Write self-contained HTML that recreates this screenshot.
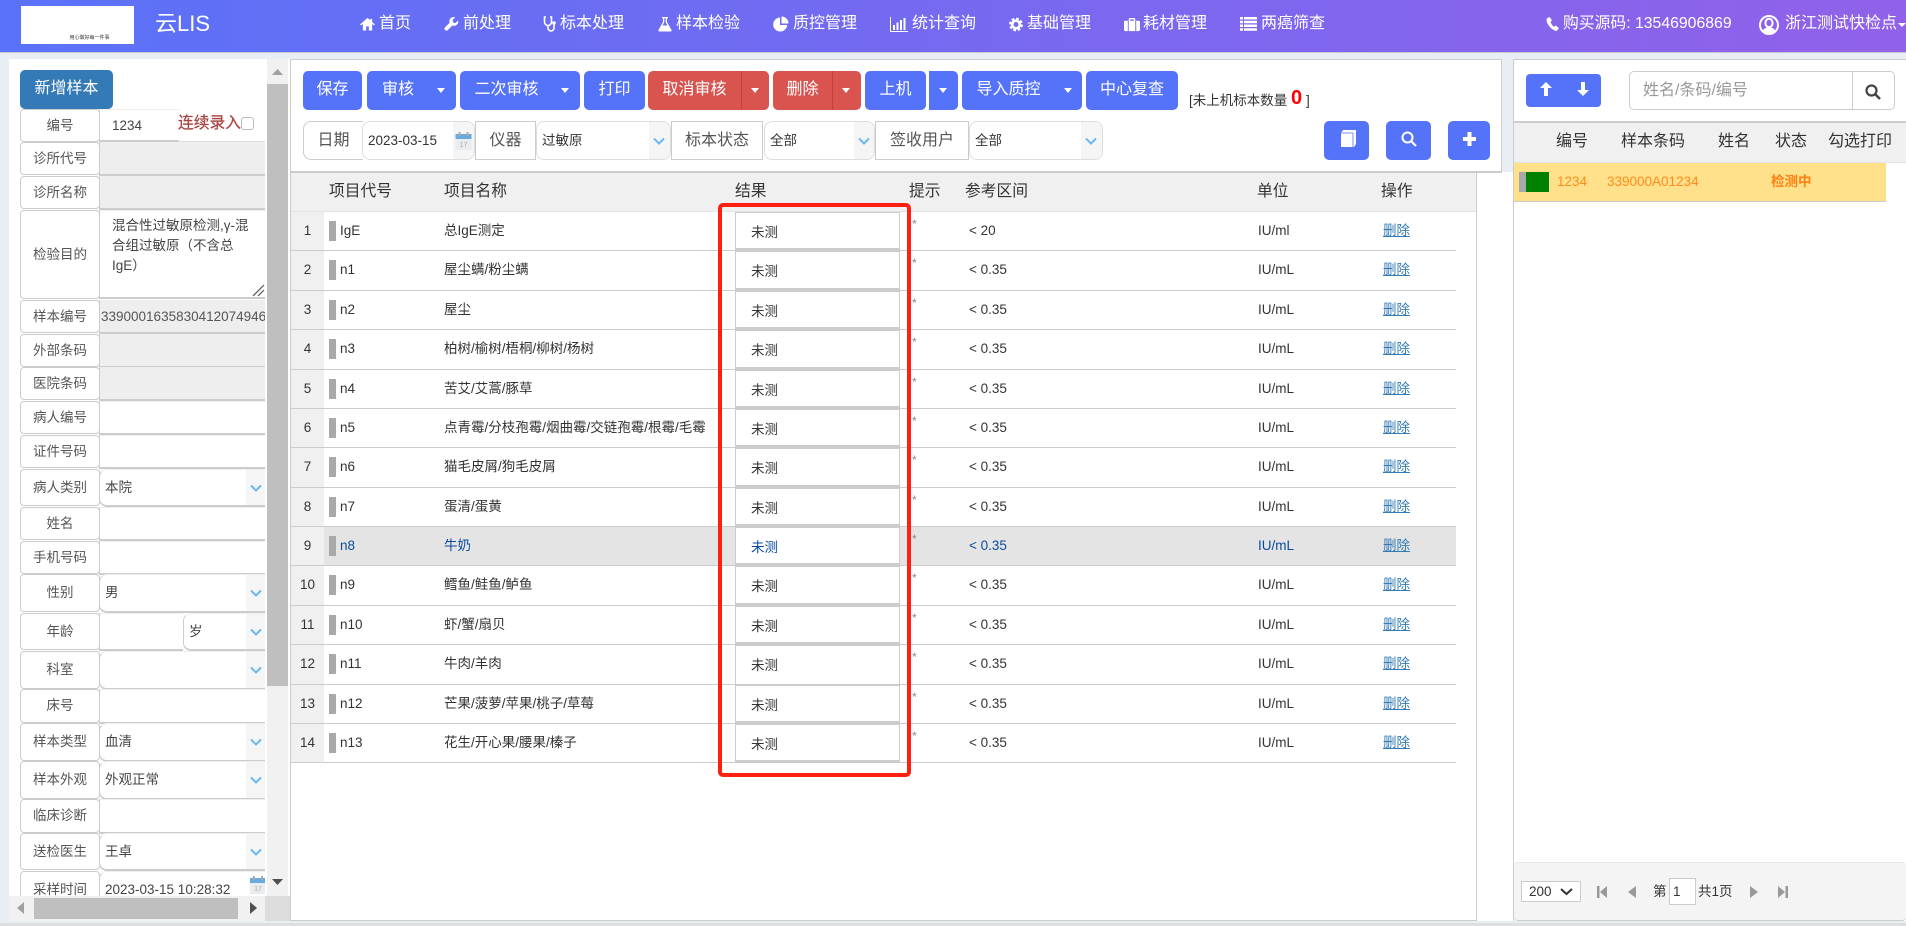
<!DOCTYPE html>
<html lang="zh"><head><meta charset="utf-8"><title>云LIS</title>
<style>
*{box-sizing:border-box}
html,body{margin:0;padding:0;width:1906px;height:926px;overflow:hidden;background:#e9edf4;font-family:"Liberation Sans","Noto Sans CJK SC",sans-serif;font-size:13.5px;color:#333}
div,span,a,b,i,svg{position:absolute;display:block}
i,b{font-style:normal;font-weight:normal}
#hd{left:0;top:0;width:1906px;height:53px;background:linear-gradient(90deg,#5a72f8,#9161e9);border-bottom:1px solid #c6c9d0}
#hd span{color:#fff;font-size:16px;line-height:20px;top:14px;white-space:nowrap}
#hd svg{fill:#fff}
#logo{left:21px;top:6px;width:113px;height:38px;background:#fff;color:#333;font-size:5px;line-height:7px;text-align:center;padding-top:29px;padding-left:24px}
#leftp{left:0;top:0;width:265px;height:896px;overflow:hidden}
#leftbg{left:9px;top:59px;width:256px;height:862px;background:#fff}
.l{left:20px;width:80px;border:1px solid #ccc;border-radius:4px;background:#fff;color:#555;font-size:13.5px;text-align:center;white-space:nowrap}
.v{left:99px;width:170px;background:#fff;border-top:1px solid #eee;border-bottom:2px solid #ccc;border-left:1px solid #ccc;padding-left:12px;font-size:13.5px;color:#444;white-space:nowrap;overflow:hidden}
.d{background:#eee}
.s{border-radius:8px 0 0 8px;padding-left:5px}
.ar{right:4px;top:0;bottom:0;width:19px;background:#f5f5f5}
.ar svg,.ar2 svg{left:4px;top:50%;margin-top:-4px;width:12px;height:8px;fill:none;stroke:#6ab8f2;stroke-width:2}
#top{left:290px;top:59px;width:1212px;height:114px;background:#fff;border:1px solid #ccc;border-bottom:2px solid #ccc}
#main{left:290px;top:172px;width:1224px;height:749px;background:#fff}
.btn{top:71px;height:39px;background:#5473f9;color:#fff;font-size:16px;line-height:37px;text-align:center;border-radius:5px;white-space:nowrap}
.red{background:#d9534f}
.cr{top:17px;width:0;height:0;border-left:4.5px solid transparent;border-right:4.5px solid transparent;border-top:5px solid #fff}
.sep{top:0;bottom:0;width:1px;background:#c43e3a}
.f{top:121px;height:39px;border:1px solid #ccc;background:#fff;color:#555;font-size:16px;line-height:37px;text-align:center;white-space:nowrap}
.fs{top:121px;height:39px;border:1px solid #ddd;border-radius:8px;background:#fff;font-size:13.5px;line-height:37px;padding-left:5px;color:#333;overflow:hidden}
.ar2{right:0;top:0;bottom:0;background:#f5f5f5}
.ib{top:121px;height:39px;background:#5473f9;border-radius:5px}
#tbl{left:290px;top:172px;width:1187px;height:749px;border-left:1px solid #ccc;border-right:1px solid #ccc;border-bottom:1px solid #ccc;background:#fff}
#th{left:0;top:0;width:1185px;height:40px;background:#f0f0f0;border-bottom:1px solid #e4e4e4;border-top:1px solid #ccc}
#th span{top:8px;font-size:15.75px;line-height:22px;color:#333;white-space:nowrap}
.r{left:291px;width:1165px;border-bottom:1px solid #ccc;line-height:38px;white-space:nowrap}
.r .n{left:0;top:0;bottom:0;width:33px;background:#f0f0f0;text-align:center;font-size:13.5px}
.r .bar{left:38px;top:9px;width:7px;height:20px;background:#a9a9a9}
.r .c{left:49px;top:0}.r .m{left:153px;top:0}
.r .res{left:444px;top:0;bottom:-1px;width:165px;background:#fff;border:1px solid #ccc;border-bottom:3px solid #ccc;padding-left:15px;line-height:40px}
.r .st{left:621px;top:-7px;color:#888;font-size:12px}
.r .ref{left:678px;top:0}.r .u{left:967px;top:0}
.r .del{left:1092px;top:0;color:#337ab7;text-decoration:underline}
.hl{background:#e4e4e4;color:#0b4b9e}
#redbox{left:718px;top:203px;width:193px;height:574px;border:4.5px solid #ff2012;border-radius:5px}
#rp{left:1513px;top:59px;width:393px;height:862px;background:#fff;border-left:1px solid #ccc;border-top:1px solid #ccc}
#rth{left:1514px;top:121px;width:392px;height:42px;background:#f0f0f0;border-top:2px solid #ccc;border-bottom:1px solid #e4e4e4}
#rth span{top:7px;font-size:16px;line-height:24px;white-space:nowrap;color:#333}
#sel{left:1514px;top:163px;width:372px;height:39px;background:#ffe18c;border-bottom:1px solid #ccc;color:#ff8c1a;line-height:38px;white-space:nowrap}
#pg{left:1514px;top:862px;width:392px;height:59px;background:#f4f4f4;border-top:1px solid #e6e6e6;border-bottom:1px solid #ccc;border-radius:4px}
.sb{background:#bfbfbf}
</style></head><body>

<div id="hd">
<div id="logo">用心做好每一件事</div>
<span style="left:155px;top:11px;font-size:22px;line-height:26px">云LIS</span>
<svg style="left:360px;top:17px;width:15px;height:14px" viewBox="0 0 16 15"><path d="M8 1L0 8l1 1 2-1.700V14.500h3.600v-4.500h2.800v4.500H13V7.300L15 9l1-1-3-2.700V2h-2v1.500z"/></svg><span style="left:379px">首页</span>
<svg style="left:444px;top:16px;width:15px;height:16px" viewBox="0 0 16 16"><path d="M15 4.200l-2.900 2.800-2.400-.6-.6-2.500L11.900.9A4.500 4.500 0 0 0 6 6.600L1.200 11.400a2 2 0 0 0 2.900 3L9 9.600A4.500 4.500 0 0 0 15 4.200z"/></svg><span style="left:463px">前处理</span>
<svg style="left:543px;top:16px;width:14px;height:16px" viewBox="0 0 14 16"><path d="M3 1H1.500v5a3.500 3.500 0 0 0 7 0V1H7M5 9.500V12a3 3 0 0 0 6 0V8.500" fill="none" stroke="#fff" stroke-width="1.600"/><circle cx="11" cy="7" r="1.800"/></svg><span style="left:560px">标本处理</span>
<svg style="left:658px;top:16px;width:14px;height:16px" viewBox="0 0 14 16"><path d="M4 1h6v1.300H9V6l4.500 8a1 1 0 0 1-.9 1.500H1.400A1 1 0 0 1 .5 14L5 6V2.300H4zM6.300 2.300V6.400L4.600 9.500h4.800L7.700 6.400V2.300z"/></svg><span style="left:676px">样本检验</span>
<svg style="left:773px;top:16px;width:16px;height:16px" viewBox="0 0 16 16"><path d="M7 1.500A7 7 0 1 0 14.200 9H7zM8.500.5V7.500h7A7 7 0 0 0 8.500.5z"/></svg><span style="left:793px">质控管理</span>
<svg style="left:890px;top:17px;width:18px;height:15px" viewBox="0 0 18 15"><path d="M0 0h1v14h17v1H0zM3 8h2v5H3zM6.500 5.500h2V13h-2zM10 3h2v10h-2zM13.500 1h2v12h-2z"/></svg><span style="left:912px">统计查询</span>
<svg style="left:1009px;top:17px;width:14px;height:15px" viewBox="0 0 16 16"><circle cx="8" cy="8" r="4.300" fill="none" stroke="#fff" stroke-width="3"/><circle cx="8" cy="8" r="6.500" fill="none" stroke="#fff" stroke-width="2.800" stroke-dasharray="3 2.100"/></svg><span style="left:1027px">基础管理</span>
<svg style="left:1124px;top:17px;width:16px;height:15px" viewBox="0 0 17 16"><path d="M1.500 4h2.500v11H1.500A1.500 1.500 0 0 1 0 13.500v-8A1.500 1.500 0 0 1 1.500 4zM5 4V2.500A1.500 1.500 0 0 1 6.500 1h4A1.500 1.500 0 0 1 12 2.500V4v11H5zM6.500 2.500V4h4V2.500zM13 4h2.500A1.500 1.500 0 0 1 17 5.500v8a1.500 1.500 0 0 1-1.500 1.500H13z"/></svg><span style="left:1143px">耗材管理</span>
<svg style="left:1240px;top:17px;width:17px;height:14px" viewBox="0 0 17 14"><path d="M0 0h3v2.500H0zM4 0h13v2.500H4zM0 3.700h3v2.500H0zM4 3.700h13v2.500H4zM0 7.500h3V10H0zM4 7.500h13V10H4zM0 11.200h3v2.500H0zM4 11.200h13v2.500H4z"/></svg><span style="left:1261px">两癌筛查</span>
<svg style="left:1546px;top:17px;width:13px;height:14px" viewBox="0 0 13 14"><path d="M3.500 0L.8 1.500C-.5 5.500 4.500 12.800 10.500 14L13 11.200 9.800 8.500 8 9.800C6.700 8.800 5 6.500 4.500 4.700L6 3.300z"/></svg><span style="left:1563px;font-size:15.8px">购买源码: 13546906869</span>
<svg style="left:1759px;top:15px;width:20px;height:20px" viewBox="0 0 20 20"><circle cx="10" cy="10" r="9" fill="none" stroke="#fff" stroke-width="2"/><ellipse cx="10" cy="8" rx="3.600" ry="4.300" fill="none" stroke="#fff" stroke-width="2"/><path d="M3.500 16c1.500-2.800 3.500-3.500 6.500-3.500s5 .7 6.500 3.500a9 9 0 0 1-13 0z"/></svg><span style="left:1785px">浙江测试快检点</span>
<div style="left:1898px;top:23px;width:0;height:0;border-left:4px solid transparent;border-right:4px solid transparent;border-top:4px solid #fff"></div>
</div>

<div id="leftbg"></div>
<div id="leftp">
<div style="left:20px;top:70px;width:93px;height:39px;background:#337ab7;border-radius:5px;color:#fff;font-size:16px;line-height:37px;text-align:center">新增样本</div>
<div class="l" style="top:109px;height:33px;line-height:31px">编号</div><div class="v" style="top:109px;height:33px;line-height:31px;width:80px">1234</div>
<div style="left:178px;top:112px;font-size:15.75px;line-height:24px;color:#a94442;white-space:nowrap;-webkit-text-stroke:.25px #a94442">连续录入</div>
<div style="left:241px;top:117px;width:13px;height:13px;border:1px solid #bbb;border-radius:3px;background:#fff"></div>
<div style="left:178px;top:141px;width:90px;height:1px;background:#ddd"></div>
<div class="l" style="top:142px;height:33px;line-height:31px">诊所代号</div><div class="v d" style="top:142px;height:34px"></div>
<div class="l" style="top:176px;height:33px;line-height:31px">诊所名称</div><div class="v d" style="top:176px;height:34px"></div>
<div class="l" style="top:210px;height:89px;line-height:87px">检验目的</div><div class="v" style="top:210px;height:89px;line-height:20px;padding-top:5px;white-space:nowrap">混合性过敏原检测,γ-混<br>合组过敏原（不含总<br>IgE）
<svg style="left:152px;top:73px;width:13px;height:13px" viewBox="0 0 13 13"><path d="M1 12L12 1M6 12l6-6" stroke="#555" stroke-width="1.200"/></svg></div>
<div class="l" style="top:300px;height:33px;line-height:31px">样本编号</div><div class="v d" style="top:300px;height:34px;line-height:31px;padding-left:1px;color:#555">3390001635830412074946</div>
<div class="l" style="top:334px;height:33px;line-height:31px">外部条码</div><div class="v d" style="top:334px;height:34px"></div>
<div class="l" style="top:367px;height:33px;line-height:31px">医院条码</div><div class="v d" style="top:367px;height:34px"></div>
<div class="l" style="top:401px;height:33px;line-height:31px">病人编号</div><div class="v" style="top:401px;height:34px"></div>
<div class="l" style="top:435px;height:33px;line-height:31px">证件号码</div><div class="v" style="top:435px;height:34px"></div>
<div class="l" style="top:469px;height:37px;line-height:35px">病人类别</div><div class="v s" style="top:469px;height:38px;line-height:35px">本院<div class="ar"><svg viewBox="0 0 12 8"><path d="M1 1.500l5 5 5-5"/></svg></div></div>
<div class="l" style="top:507px;height:33px;line-height:31px">姓名</div><div class="v" style="top:507px;height:34px"></div>
<div class="l" style="top:541px;height:33px;line-height:31px">手机号码</div><div class="v" style="top:541px;height:34px"></div>
<div class="l" style="top:574px;height:38px;line-height:36px">性别</div><div class="v s" style="top:574px;height:39px;line-height:36px">男<div class="ar"><svg viewBox="0 0 12 8"><path d="M1 1.500l5 5 5-5"/></svg></div></div>
<div class="l" style="top:613px;height:37px;line-height:35px">年龄</div><div class="v" style="top:613px;height:38px;width:84px"></div>
<div class="v s" style="top:613px;height:38px;line-height:35px;left:183px;width:86px">岁<div class="ar"><svg viewBox="0 0 12 8"><path d="M1 1.500l5 5 5-5"/></svg></div></div>
<div class="l" style="top:651px;height:38px;line-height:36px">科室</div><div class="v s" style="top:651px;height:39px"><div class="ar"><svg viewBox="0 0 12 8"><path d="M1 1.500l5 5 5-5"/></svg></div></div>
<div class="l" style="top:689px;height:34px;line-height:32px">床号</div><div class="v" style="top:689px;height:35px"></div>
<div class="l" style="top:723px;height:38px;line-height:36px">样本类型</div><div class="v s" style="top:723px;height:39px;line-height:36px">血清<div class="ar"><svg viewBox="0 0 12 8"><path d="M1 1.500l5 5 5-5"/></svg></div></div>
<div class="l" style="top:761px;height:38px;line-height:36px">样本外观</div><div class="v s" style="top:761px;height:39px;line-height:36px">外观正常<div class="ar"><svg viewBox="0 0 12 8"><path d="M1 1.500l5 5 5-5"/></svg></div></div>
<div class="l" style="top:799px;height:34px;line-height:32px">临床诊断</div><div class="v" style="top:799px;height:35px"></div>
<div class="l" style="top:833px;height:37px;line-height:35px">送检医生</div><div class="v s" style="top:833px;height:38px;line-height:35px">王卓<div class="ar"><svg viewBox="0 0 12 8"><path d="M1 1.500l5 5 5-5"/></svg></div></div>
<div class="l" style="top:871px;height:38px;line-height:36px">采样时间</div><div class="v s" style="top:871px;height:39px;line-height:36px">2023-03-15 10:28:32
<svg style="left:150px;top:4px;width:16px;height:18px" viewBox="0 0 16 18"><rect x="0" y="3" width="16" height="15" fill="#e9edf0"/><rect x="0" y="2" width="16" height="5" fill="#6aa9dc"/><rect x="3" y="0" width="2" height="4" fill="#aaa"/><rect x="11" y="0" width="2" height="4" fill="#aaa"/><text x="8" y="15" font-size="7" text-anchor="middle" fill="#aaa" font-family="Liberation Sans">17</text></svg></div>
</div>
<div style="left:265px;top:59px;width:25px;height:862px;background:#fff"></div>
<div style="left:267px;top:59px;width:21px;height:837px;background:#f1f1f1"></div>
<div class="sb" style="left:267px;top:84px;width:21px;height:602px"></div>
<svg style="left:272px;top:68px;width:11px;height:8px" viewBox="0 0 11 8"><path d="M5.500 1L11 7H0z" fill="#a0a0a0"/></svg>
<svg style="left:272px;top:879px;width:11px;height:7px" viewBox="0 0 11 7"><path d="M0 0h11L5.500 6z" fill="#505050"/></svg>
<div style="left:9px;top:896px;width:256px;height:25px;background:#f1f1f1"></div>
<div style="left:265px;top:896px;width:25px;height:25px;background:#dcdcdc"></div>
<div class="sb" style="left:34px;top:898px;width:204px;height:21px"></div>
<svg style="left:17px;top:902px;width:8px;height:12px" viewBox="0 0 8 12"><path d="M7 0v12L0 6z" fill="#a0a0a0"/></svg>
<svg style="left:249px;top:902px;width:8px;height:12px" viewBox="0 0 8 12"><path d="M1 0v12l7-6z" fill="#505050"/></svg>

<div id="main"></div>
<div id="top"></div>
<div class="btn" style="left:303px;width:59px">保存</div>
<div class="btn" style="left:367px;width:89px;padding-right:27px">审核<div class="cr" style="left:70px"></div></div>
<div class="btn" style="left:460px;width:120px;padding-right:27px">二次审核<div class="cr" style="left:101px"></div></div>
<div class="btn" style="left:584px;width:61px">打印</div>
<div class="btn red" style="left:648px;width:121px;padding-right:28px">取消审核<div class="sep" style="left:93px"></div><div class="cr" style="left:103px"></div></div>
<div class="btn red" style="left:773px;width:88px;padding-right:29px">删除<div class="sep" style="left:59px"></div><div class="cr" style="left:69px"></div></div>
<div class="btn" style="left:865px;width:61px">上机</div>
<div class="btn" style="left:929px;width:29px;border-radius:0 5px 5px 0"><div class="cr" style="left:10px"></div></div>
<div class="btn" style="left:962px;width:120px;padding-right:27px">导入质控<div class="cr" style="left:102px"></div></div>
<div class="btn" style="left:1086px;width:92px">中心复查</div>
<div style="left:1189px;top:91px;height:20px;line-height:20px;font-size:13.5px;white-space:nowrap">[未上机标本数量</div>
<div style="left:1291px;top:85px;font-size:20px;line-height:26px;font-weight:bold;color:#ff0000">0</div>
<div style="left:1306px;top:91px;line-height:20px;font-size:13.5px">]</div>

<div class="f" style="left:303px;width:60px;border-radius:8px 0 0 8px;border-right:0">日期</div>
<div class="fs" style="left:362px;width:113px">2023-03-15<div class="ar2" style="width:21px"><svg style="left:2px;top:10px;margin:0;width:17px;height:18px;stroke:none" viewBox="0 0 16 18"><rect x="0" y="3" width="16" height="15" fill="#e9edf0"/><rect x="0" y="2" width="16" height="5" fill="#6aa9dc"/><rect x="3" y="0" width="2" height="4" fill="#aaa"/><rect x="11" y="0" width="2" height="4" fill="#aaa"/><text x="8" y="15" font-size="7" text-anchor="middle" fill="#aaa" font-family="Liberation Sans">17</text></svg></div></div>
<div class="f" style="left:475px;width:61px">仪器</div>
<div class="fs" style="left:536px;width:135px">过敏原<div class="ar2" style="width:21px"><svg viewBox="0 0 12 8"><path d="M1 1.500l5 5 5-5"/></svg></div></div>
<div class="f" style="left:671px;width:92px">标本状态</div>
<div class="fs" style="left:764px;width:111px">全部<div class="ar2" style="width:20px"><svg viewBox="0 0 12 8"><path d="M1 1.500l5 5 5-5"/></svg></div></div>
<div class="f" style="left:875px;width:94px">签收用户</div>
<div class="fs" style="left:969px;width:134px">全部<div class="ar2" style="width:21px"><svg viewBox="0 0 12 8"><path d="M1 1.500l5 5 5-5"/></svg></div></div>
<div class="ib" style="left:1324px;width:45px"><svg style="left:16px;top:9px;width:16px;height:17px" viewBox="0 0 16 17"><path d="M3 0h13v14l-2 3H1V3z" fill="#fff"/><path d="M13 3v14M1 3h12" stroke="#5473f9" stroke-width=".8" fill="none"/></svg></div>
<div class="ib" style="left:1386px;width:45px"><svg style="left:15px;top:10px;width:16px;height:16px" viewBox="0 0 16 16"><circle cx="6.500" cy="6.500" r="5" fill="none" stroke="#fff" stroke-width="2"/><path d="M10 10l5 5" stroke="#fff" stroke-width="2.200"/></svg></div>
<div class="ib" style="left:1448px;width:42px"><svg style="left:15px;top:11px;width:13px;height:14px" viewBox="0 0 13 14"><path d="M4.500 0h4v5H13v4H8.500v5h-4V9H0V5h4.500z" fill="#fff"/></svg></div>

<div id="tbl"><div id="th">
<span style="left:38px">项目代号</span><span style="left:153px">项目名称</span><span style="left:444px">结果</span><span style="left:618px">提示</span><span style="left:674px">参考区间</span><span style="left:966px">单位</span><span style="left:1090px">操作</span>
</div></div>

<div class="r" style="top:212px;height:39px"><i class="n">1</i><b class="bar"></b><span class="c">IgE</span><span class="m">总IgE测定</span><span class="res">未测</span><span class="st">*</span><span class="ref">&lt; 20</span><span class="u">IU/ml</span><a class="del">删除</a></div>
<div class="r" style="top:251px;height:40px"><i class="n">2</i><b class="bar"></b><span class="c">n1</span><span class="m">屋尘螨/粉尘螨</span><span class="res">未测</span><span class="st">*</span><span class="ref">&lt; 0.35</span><span class="u">IU/mL</span><a class="del">删除</a></div>
<div class="r" style="top:291px;height:39px"><i class="n">3</i><b class="bar"></b><span class="c">n2</span><span class="m">屋尘</span><span class="res">未测</span><span class="st">*</span><span class="ref">&lt; 0.35</span><span class="u">IU/mL</span><a class="del">删除</a></div>
<div class="r" style="top:330px;height:40px"><i class="n">4</i><b class="bar"></b><span class="c">n3</span><span class="m">柏树/榆树/梧桐/柳树/杨树</span><span class="res">未测</span><span class="st">*</span><span class="ref">&lt; 0.35</span><span class="u">IU/mL</span><a class="del">删除</a></div>
<div class="r" style="top:370px;height:39px"><i class="n">5</i><b class="bar"></b><span class="c">n4</span><span class="m">苦艾/艾蒿/豚草</span><span class="res">未测</span><span class="st">*</span><span class="ref">&lt; 0.35</span><span class="u">IU/mL</span><a class="del">删除</a></div>
<div class="r" style="top:409px;height:39px"><i class="n">6</i><b class="bar"></b><span class="c">n5</span><span class="m">点青霉/分枝孢霉/烟曲霉/交链孢霉/根霉/毛霉</span><span class="res">未测</span><span class="st">*</span><span class="ref">&lt; 0.35</span><span class="u">IU/mL</span><a class="del">删除</a></div>
<div class="r" style="top:448px;height:40px"><i class="n">7</i><b class="bar"></b><span class="c">n6</span><span class="m">猫毛皮屑/狗毛皮屑</span><span class="res">未测</span><span class="st">*</span><span class="ref">&lt; 0.35</span><span class="u">IU/mL</span><a class="del">删除</a></div>
<div class="r" style="top:488px;height:39px"><i class="n">8</i><b class="bar"></b><span class="c">n7</span><span class="m">蛋清/蛋黄</span><span class="res">未测</span><span class="st">*</span><span class="ref">&lt; 0.35</span><span class="u">IU/mL</span><a class="del">删除</a></div>
<div class="r hl" style="top:527px;height:39px"><i class="n" style="color:#333">9</i><b class="bar"></b><span class="c">n8</span><span class="m">牛奶</span><span class="res">未测</span><span class="st">*</span><span class="ref">&lt; 0.35</span><span class="u">IU/mL</span><a class="del">删除</a></div>
<div class="r" style="top:566px;height:40px"><i class="n">10</i><b class="bar"></b><span class="c">n9</span><span class="m">鳕鱼/鲑鱼/鲈鱼</span><span class="res">未测</span><span class="st">*</span><span class="ref">&lt; 0.35</span><span class="u">IU/mL</span><a class="del">删除</a></div>
<div class="r" style="top:606px;height:39px"><i class="n">11</i><b class="bar"></b><span class="c">n10</span><span class="m">虾/蟹/扇贝</span><span class="res">未测</span><span class="st">*</span><span class="ref">&lt; 0.35</span><span class="u">IU/mL</span><a class="del">删除</a></div>
<div class="r" style="top:645px;height:40px"><i class="n">12</i><b class="bar"></b><span class="c">n11</span><span class="m">牛肉/羊肉</span><span class="res" style="border-bottom:1px solid #ccc">未测</span><span class="st">*</span><span class="ref">&lt; 0.35</span><span class="u">IU/mL</span><a class="del">删除</a></div>
<div class="r" style="top:685px;height:39px"><i class="n">13</i><b class="bar"></b><span class="c">n12</span><span class="m">芒果/菠萝/苹果/桃子/草莓</span><span class="res">未测</span><span class="st">*</span><span class="ref">&lt; 0.35</span><span class="u">IU/mL</span><a class="del">删除</a></div>
<div class="r" style="top:724px;height:39px"><i class="n">14</i><b class="bar"></b><span class="c">n13</span><span class="m">花生/开心果/腰果/榛子</span><span class="res">未测</span><span class="st">*</span><span class="ref">&lt; 0.35</span><span class="u">IU/mL</span><a class="del">删除</a></div>
<div id="redbox"></div>

<div id="rp"></div>
<div style="left:1526px;top:74px;width:75px;height:33px;background:#5473f9;border-radius:4px"><svg style="left:14px;top:8px;width:12px;height:14px" viewBox="0 0 12 14"><path d="M6 0l6 6H8v8H4V6H0z" fill="#fff"/></svg><svg style="left:51px;top:8px;width:12px;height:14px" viewBox="0 0 12 14"><path d="M6 14l6-6H8V0H4v8H0z" fill="#fff"/></svg></div>
<div style="left:1629px;top:71px;width:266px;height:39px;border:1px solid #ccc;border-radius:5px;background:#fff"><span style="left:13px;top:8px;font-size:16px;line-height:22px;color:#999;white-space:nowrap">姓名/条码/编号</span><div style="left:222px;top:0;bottom:0;width:1px;background:#ccc"></div><svg style="left:235px;top:12px;width:16px;height:16px" viewBox="0 0 16 16"><circle cx="6.500" cy="6.500" r="5" fill="none" stroke="#444" stroke-width="2.200"/><path d="M10 10l5 5" stroke="#444" stroke-width="2.500"/></svg></div>
<div id="rth"><span style="left:42px">编号</span><span style="left:107px">样本条码</span><span style="left:204px">姓名</span><span style="left:261px">状态</span><span style="left:314px">勾选打印</span></div>
<div id="sel"><div style="left:5px;top:9px;width:7px;height:20px;background:#a9a9a9"></div><div style="left:12px;top:9px;width:23px;height:20px;background:#008000"></div><span style="left:43px;top:0">1234</span><span style="left:93px;top:0">339000A01234</span><span style="left:257px;top:0;font-weight:bold;color:#ff7f10">检测中</span></div>

<div id="pg"></div>
<div style="left:1521px;top:881px;width:60px;height:21px;border:1px solid #ccc;background:#fff;line-height:19px;padding-left:7px;font-size:13.5px">200<svg style="left:38px;top:6px;width:13px;height:8px" viewBox="0 0 13 8"><path d="M1 1l5.500 5L12 1" fill="none" stroke="#333" stroke-width="2"/></svg></div>
<svg style="left:1597px;top:886px;width:10px;height:12px" viewBox="0 0 10 12"><path d="M0 0h2.500v12H0zM10 0v12L3 6z" fill="#999"/></svg>
<svg style="left:1628px;top:886px;width:8px;height:12px" viewBox="0 0 8 12"><path d="M8 0v12L0 6z" fill="#999"/></svg>
<span style="left:1653px;top:883px;line-height:18px">第</span>
<div style="left:1669px;top:878px;width:27px;height:27px;border:1px solid #ccc;background:#fff;line-height:25px;padding-left:3px">1</div>
<span style="left:1698px;top:883px;line-height:18px;white-space:nowrap">共1页</span>
<svg style="left:1750px;top:886px;width:8px;height:12px" viewBox="0 0 8 12"><path d="M0 0v12l8-6z" fill="#999"/></svg>
<svg style="left:1778px;top:886px;width:10px;height:12px" viewBox="0 0 10 12"><path d="M0 0v12l7-6zM7.500 0H10v12H7.500z" fill="#999"/></svg>
<div style="left:0;top:923px;width:1906px;height:3px;background:#dfdfe2"></div>
</body></html>
